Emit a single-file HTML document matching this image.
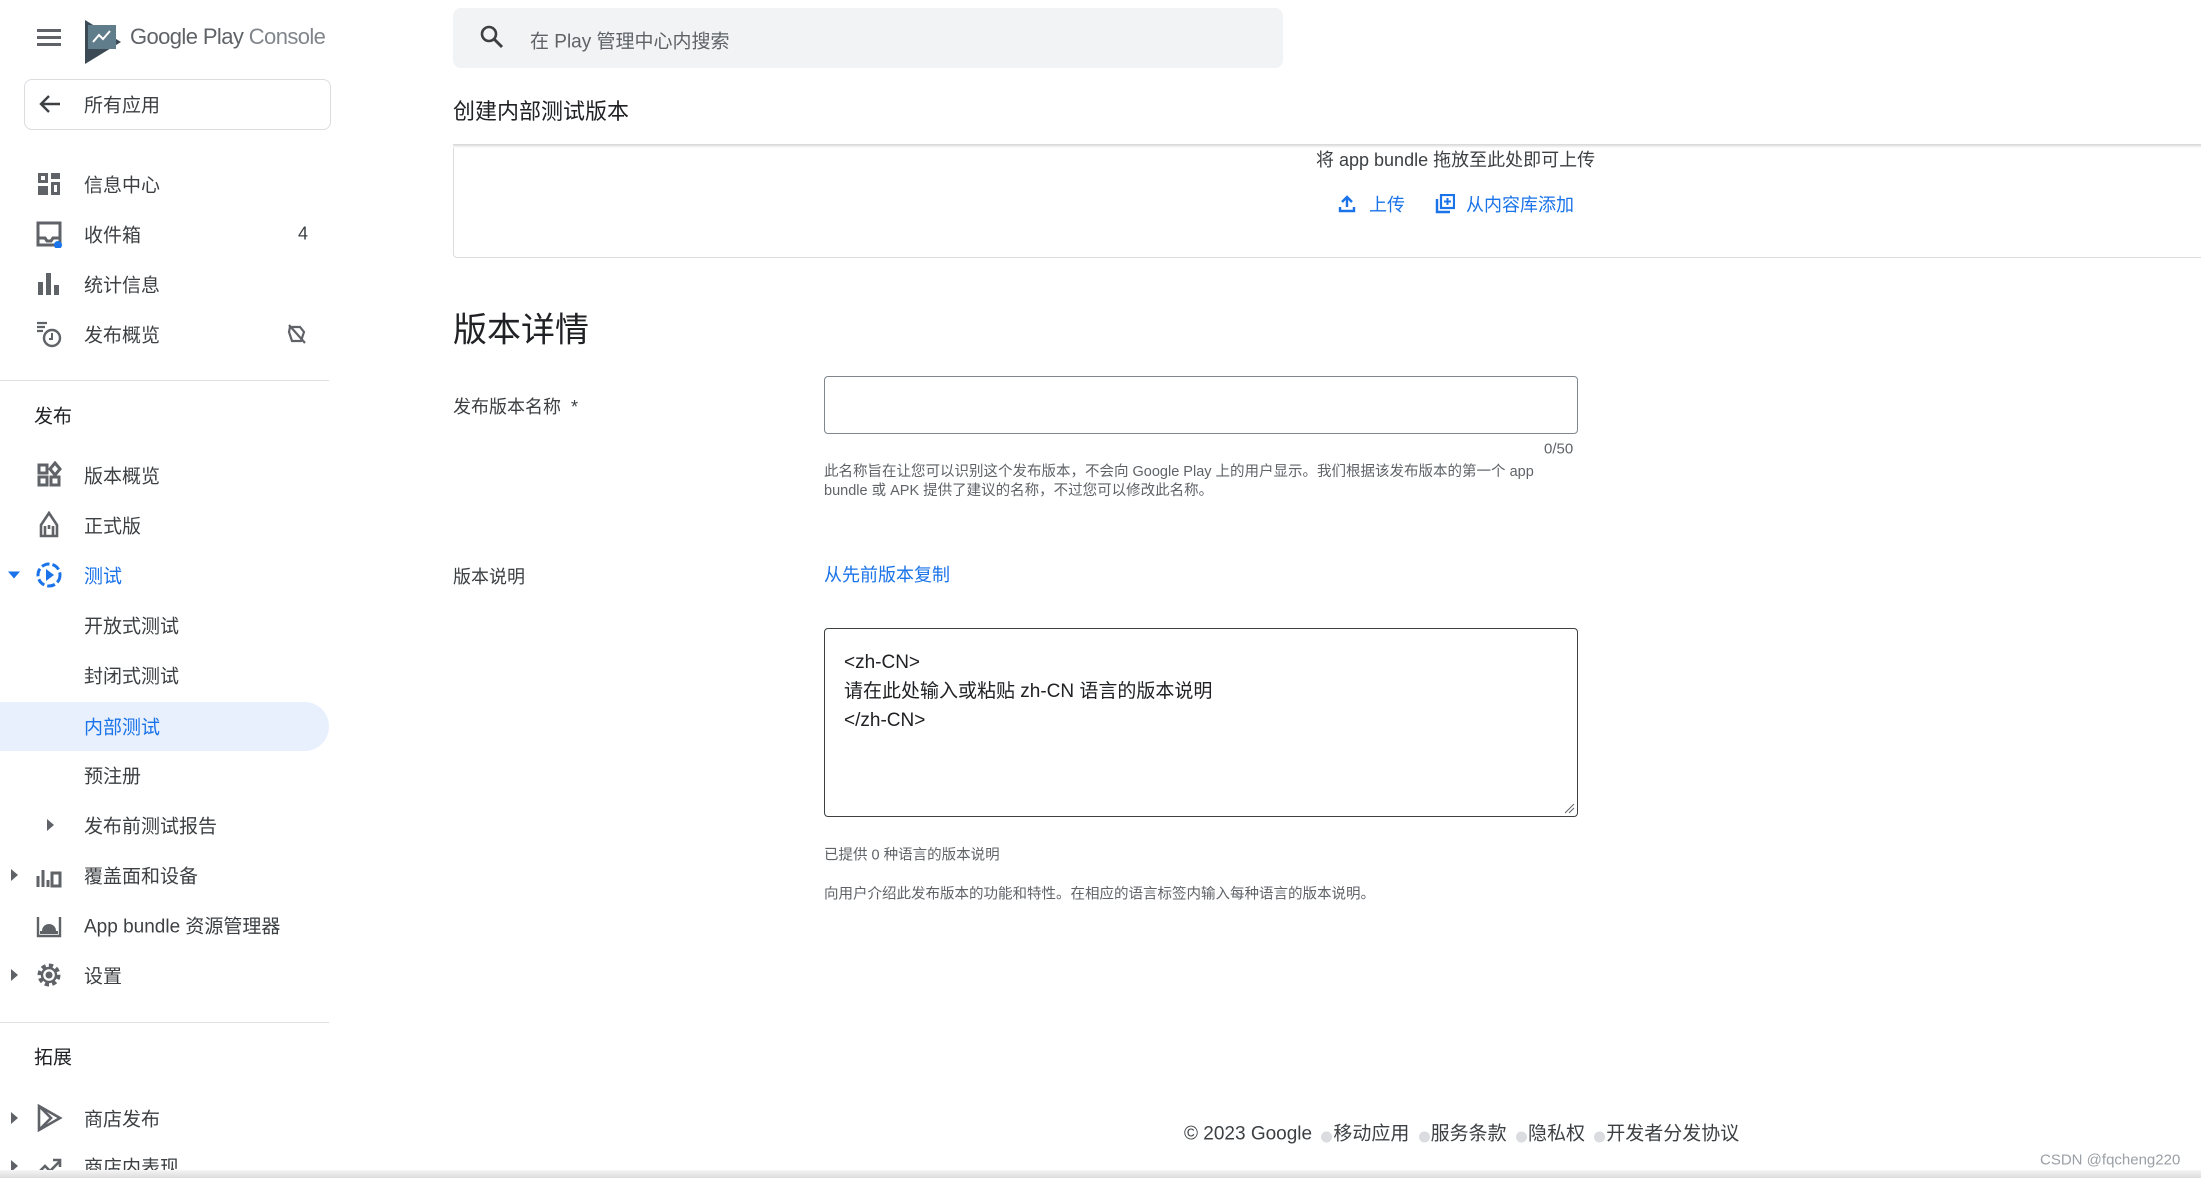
<!DOCTYPE html>
<html><head><meta charset="utf-8"><style>
*{margin:0;padding:0;box-sizing:border-box}
body{width:2201px;height:1178px;overflow:hidden;background:#fff;font-family:"Liberation Sans","Noto Sans CJK SC",sans-serif;color:#3c4043;position:relative}
.a{position:absolute;white-space:nowrap}
.nav{position:absolute;left:84px;font-size:19px;color:#3c4043;transform:translateY(-50%)}
.ic{position:absolute;left:35px;width:28px;height:28px;transform:translateY(-50%)}
.arr{position:absolute;width:0;height:0;border-top:6px solid transparent;border-bottom:6px solid transparent;border-left:7px solid #5f6368;transform:translateY(-50%)}
.c{transform:translateY(-50%)}
.dot{display:inline-block;width:11px;height:11px;border-radius:50%;background:#dadce0;vertical-align:-3px;margin:0 1px 0 4px}
</style></head><body>
<svg class="a" style="left:37px;top:27px" width="24" height="20"><rect y="2" width="24" height="3" fill="#5f6368"/><rect y="9" width="24" height="3" fill="#5f6368"/><rect y="16" width="24" height="3" fill="#5f6368"/></svg>
<svg class="a" style="left:85px;top:20px" width="36" height="46"><path d="M0 0 L36 22 L0 44Z" fill="#3c4a55"/><rect x="3" y="5" width="28" height="24" fill="#607d8b"/><path d="M8 22 L14 15 L18 19 L25 11" stroke="#fff" stroke-width="2" fill="none"/></svg>
<div class="a c" style="left:130px;top:37px;font-size:22px;letter-spacing:-0.6px;color:#5f6368">Google Play <span style="color:#80868b">Console</span></div>
<div class="a" style="left:24px;top:79px;width:307px;height:51px;border:1px solid #dadce0;border-radius:8px"></div>
<svg class="a" style="left:38px;top:93px" width="24" height="22"><path d="M22 11H4 M11 3 L3 11 L11 19" stroke="#3c4043" stroke-width="2.4" fill="none"/></svg>
<div class="nav" style="top:104px">所有应用</div>
<svg class="ic" style="top:184px" viewBox="0 0 28 28"><path d="M3 3h10v10H3z M16 3h9v6h-9z M16 12h9v13h-9z M3 16h10v9H3z" fill="#5f6368"/><path d="M6 6h4v4H6z M19 15h3v7h-3z" fill="#fff"/></svg>
<div class="nav" style="top:184px">信息中心</div>
<svg class="ic" style="top:234px" viewBox="0 0 28 28"><rect x="3" y="3" width="22" height="22" fill="none" stroke="#5f6368" stroke-width="3"/><path d="M4 18h6l2 3h4l2-3h6" stroke="#5f6368" stroke-width="3" fill="none"/><circle cx="23" cy="25" r="4" fill="#1a73e8"/></svg>
<div class="nav" style="top:234px">收件箱</div>
<div class="a c" style="left:298px;top:234px;font-size:18px">4</div>
<svg class="ic" style="top:284px" viewBox="0 0 28 28"><rect x="3" y="12" width="5" height="13" fill="#5f6368"/><rect x="11" y="3" width="5" height="22" fill="#5f6368"/><rect x="19" y="15" width="5" height="10" fill="#5f6368"/></svg>
<div class="nav" style="top:284px">统计信息</div>
<svg class="ic" style="top:334px" viewBox="0 0 28 28"><path d="M2 3h10M2 7h8M2 11h6" stroke="#5f6368" stroke-width="2.2"/><circle cx="17" cy="18" r="8" fill="none" stroke="#5f6368" stroke-width="2.4"/><path d="M17 13v6h-3" stroke="#5f6368" stroke-width="2" fill="none"/></svg>
<div class="nav" style="top:334px">发布概览</div>
<svg class="a c" style="left:287px;top:334px" width="20" height="22"><path d="M3 4h10l4 5-3 9H5L2 9z M2 2l16 18" stroke="#5f6368" stroke-width="2.2" fill="none"/></svg>
<div class="a" style="left:0;top:380px;width:329px;height:1px;background:#e0e0e0"></div>
<div class="a c" style="left:34px;top:415px;font-size:19px;color:#202124">发布</div>
<svg class="ic" style="top:475px" viewBox="0 0 28 28"><g fill="none" stroke="#5f6368" stroke-width="3"><rect x="4" y="4" width="8" height="8"/><rect x="4" y="16" width="8" height="8"/><rect x="16" y="16" width="8" height="8"/><path d="M20 2l5 6-5 6-5-6z"/></g></svg>
<div class="nav" style="top:475px">版本概览</div>
<svg class="ic" style="top:525px" viewBox="0 0 28 28"><path d="M14 2 L6 14 V25 H22 V14Z M10 25V15 M18 25V15 M14 14v4" stroke="#5f6368" stroke-width="2.6" fill="none"/></svg>
<div class="nav" style="top:525px">正式版</div>
<div class="a c" style="left:8px;top:575px;width:0;height:0;border-left:6px solid transparent;border-right:6px solid transparent;border-top:7px solid #1a73e8"></div>
<svg class="ic" style="top:575px" viewBox="0 0 28 28"><circle cx="14" cy="14" r="11" fill="none" stroke="#1a73e8" stroke-width="3" stroke-dasharray="8 3"/><path d="M11 8l8 6-8 6z" fill="#1a73e8"/></svg>
<div class="nav" style="top:575px;color:#1a73e8">测试</div>
<div class="nav" style="top:625px">开放式测试</div>
<div class="nav" style="top:675px">封闭式测试</div>
<div class="a" style="left:0;top:702px;width:329px;height:49px;background:#e8f0fe;border-radius:0 25px 25px 0"></div>
<div class="nav" style="top:726px;color:#1a73e8">内部测试</div>
<div class="nav" style="top:775px">预注册</div>
<div class="arr" style="left:47px;top:825px"></div>
<div class="nav" style="top:825px">发布前测试报告</div>
<div class="arr" style="left:11px;top:875px"></div>
<svg class="ic" style="top:876px" viewBox="0 0 28 28"><path d="M3 14v11M8 8v17M13 18v7" stroke="#5f6368" stroke-width="3"/><rect x="17" y="11" width="8" height="13" fill="none" stroke="#5f6368" stroke-width="3"/></svg>
<div class="nav" style="top:875px">覆盖面和设备</div>
<svg class="ic" style="top:925px" viewBox="0 0 28 28"><path d="M3 6v19h22V6" fill="none" stroke="#5f6368" stroke-width="2.4"/><path d="M7 20a7 7 0 0 1 14 0z" fill="#5f6368"/><rect x="5" y="20" width="18" height="3" fill="#5f6368"/></svg>
<div class="nav" style="top:925px">App bundle 资源管理器</div>
<div class="arr" style="left:11px;top:975px"></div>
<svg class="ic" style="top:975px" viewBox="0 0 28 28"><circle cx="14" cy="14" r="9" fill="none" stroke="#5f6368" stroke-width="5" stroke-dasharray="4 3"/><circle cx="14" cy="14" r="7" fill="none" stroke="#5f6368" stroke-width="2.4"/><circle cx="14" cy="14" r="3.5" fill="#5f6368"/></svg>
<div class="nav" style="top:975px">设置</div>
<div class="a" style="left:0;top:1022px;width:329px;height:1px;background:#e0e0e0"></div>
<div class="a c" style="left:34px;top:1056px;font-size:19px;color:#202124">拓展</div>
<div class="arr" style="left:11px;top:1118px"></div>
<svg class="ic" style="top:1118px" viewBox="0 0 28 28"><path d="M4 2 L25 14 L4 26Z M4 2 L16 14 L4 26" fill="none" stroke="#5f6368" stroke-width="2.6"/></svg>
<div class="nav" style="top:1118px">商店发布</div>
<div class="arr" style="left:11px;top:1166px"></div>
<svg class="ic" style="top:1166px" viewBox="0 0 28 28"><path d="M2 22 L10 14 L15 19 L25 9 M18 8h7v7" fill="none" stroke="#5f6368" stroke-width="2.6"/></svg>
<div class="nav" style="top:1166px">商店内表现</div>

<div class="a" style="left:453px;top:8px;width:830px;height:60px;background:#f1f3f4;border-radius:8px"></div>
<svg class="a" style="left:479px;top:24px" width="26" height="26"><circle cx="10" cy="10" r="7" fill="none" stroke="#3c4043" stroke-width="2.6"/><path d="M15 15l8 8" stroke="#3c4043" stroke-width="3"/></svg>
<div class="a c" style="left:530px;top:40px;font-size:19px;color:#5f6368">在 Play 管理中心内搜索</div>
<div class="a c" style="left:453px;top:110px;font-size:22px;color:#202124">创建内部测试版本</div>
<div class="a" style="left:453px;top:146px;width:1760px;height:112px;border-left:1px solid #dadce0;border-bottom:1px solid #dadce0;border-radius:0 0 0 4px"></div>
<div class="a" style="left:453px;top:144px;width:1760px;height:4px;background:linear-gradient(#d5d5d5,#fff)"></div>
<div class="a c" style="left:1316px;top:159px;font-size:18px;color:#3c4043">将 app bundle 拖放至此处即可上传</div>
<svg class="a c" style="left:1338px;top:204px" width="18" height="18"><path d="M9 2v10 M4 7l5-5 5 5 M2 12v4h14v-4" stroke="#1a73e8" stroke-width="2.4" fill="none"/></svg>
<div class="a c" style="left:1369px;top:204px;font-size:18px;color:#1a73e8">上传</div>
<svg class="a c" style="left:1435px;top:204px" width="20" height="20"><path d="M2 5v13h13" stroke="#1a73e8" stroke-width="2.4" fill="none"/><rect x="6" y="1" width="13" height="13" fill="none" stroke="#1a73e8" stroke-width="2.2"/><path d="M12.5 4v7M9 7.5h7" stroke="#1a73e8" stroke-width="2"/></svg>
<div class="a c" style="left:1466px;top:204px;font-size:18px;color:#1a73e8">从内容库添加</div>

<div class="a c" style="left:453px;top:327px;font-size:34px;color:#202124">版本详情</div>
<div class="a c" style="left:453px;top:406px;font-size:18px;color:#3c4043">发布版本名称 &nbsp;*</div>
<div class="a" style="left:824px;top:376px;width:754px;height:58px;border:1px solid #80868b;border-radius:4px"></div>
<div class="a c" style="left:1544px;top:449px;font-size:15px;color:#5f6368">0/50</div>
<div class="a" style="left:824px;top:463px;width:752px;font-size:14.5px;line-height:19px;color:#5f6368;white-space:normal">此名称旨在让您可以识别这个发布版本，不会向 Google Play 上的用户显示。我们根据该发布版本的第一个 app bundle 或 APK 提供了建议的名称，不过您可以修改此名称。</div>
<div class="a c" style="left:453px;top:576px;font-size:18px;color:#3c4043">版本说明</div>
<div class="a c" style="left:824px;top:574px;font-size:18px;color:#1a73e8">从先前版本复制</div>
<div class="a" style="left:824px;top:628px;width:754px;height:189px;border:1.5px solid #3c4043;border-radius:4px"></div>
<div class="a" style="left:844px;top:648px;font-size:19px;line-height:29px;color:#202124">&lt;zh-CN&gt;<br>请在此处输入或粘贴 zh-CN 语言的版本说明<br>&lt;/zh-CN&gt;</div>
<svg class="a" style="left:1564px;top:803px" width="11" height="11"><path d="M10 1L1 10M10 5L5 10" stroke="#5f6368"/></svg>
<div class="a c" style="left:824px;top:854px;font-size:14.5px;color:#5f6368">已提供 0 种语言的版本说明</div>
<div class="a c" style="left:824px;top:893px;font-size:14.5px;color:#5f6368">向用户介绍此发布版本的功能和特性。在相应的语言标签内输入每种语言的版本说明。</div>

<div class="a c" style="left:1184px;top:1132px;font-size:19px;color:#3c4043">© 2023 Google <span class="dot"></span>移动应用 <span class="dot"></span>服务条款 <span class="dot"></span>隐私权 <span class="dot"></span>开发者分发协议</div>
<div class="a c" style="left:2040px;top:1160px;font-size:15px;color:#9aa0a6">CSDN @fqcheng220</div>
<div class="a" style="left:0;top:1170px;width:2201px;height:8px;background:linear-gradient(#f5f5f5,#dcdcdc)"></div>
</body></html>
